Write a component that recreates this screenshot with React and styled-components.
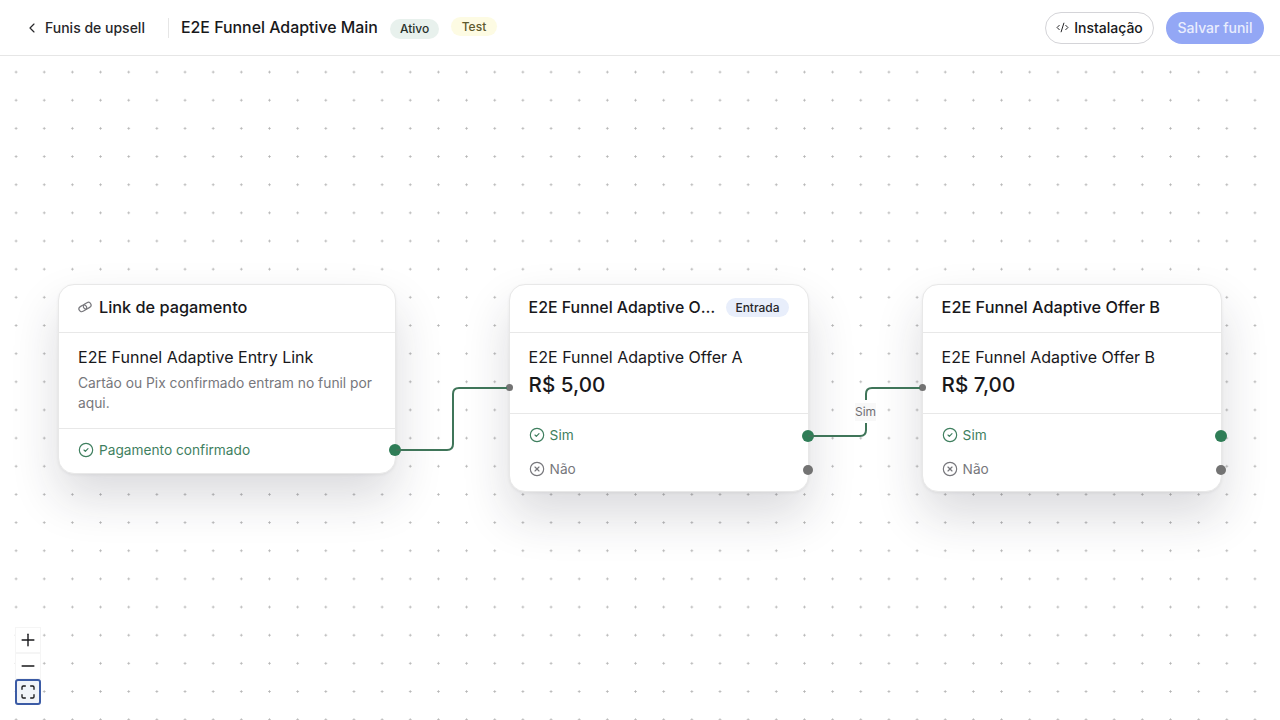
import styled, { createGlobalStyle } from "styled-components";
import { ChevronLeft, CodeXml, CircleCheck, CircleX, Plus, Minus, Maximize } from "lucide-react";

const GlobalStyle = createGlobalStyle`
    html, body {
        margin: 0;
        height: 100%;
        background: #fff;
    }
    body {
        font-family: Inter, "Liberation Sans", sans-serif;
        color: #18181b;
    }
`;

// Top bar

const Page = styled.div`
    width: 1280px;
    height: 720px;
    display: flex;
    flex-direction: column;
    overflow: hidden;
`;

const TopBar = styled.header`
    height: 55px;
    flex: none;
    display: flex;
    align-items: center;
    padding: 0 16px 0 24px;
    border-bottom: 1px solid #e6e6e6;
    background: #fff;
`;

const BackLink = styled.a`
    display: flex;
    align-items: center;
    gap: 5px;
    font-size: 14px;
    font-weight: 500;
    color: #27272a;
    padding-right: 23px;
    border-right: 1px solid #e6e6e6;
    height: 20px;
`;

const FunnelTitle = styled.h1`
    margin: 0 0 1px 12px;
    font-size: 15.9px;
    font-weight: 500;
    color: #18181b;
`;

const Badge = styled.span`
    display: inline-flex;
    align-items: center;
    height: ${(p) => p.$height}px;
    margin-left: 12px;
    margin-top: ${(p) => p.$top}px;
    padding: 0 ${(p) => p.$pad}px;
    border-radius: 10px;
    font-size: 12px;
    font-weight: 500;
    background: ${(p) => p.$bg};
    color: ${(p) => p.$color};
`;

const Actions = styled.div`
    margin-left: auto;
    display: flex;
    gap: 12px;
`;

const OutlineButton = styled.button`
    height: 32px;
    width: 109px;
    display: flex;
    align-items: center;
    justify-content: center;
    gap: 5px;
    border: 1px solid #d4d4d8;
    border-radius: 16px;
    background: #fff;
    color: #18181b;
    font: 500 14px Inter, sans-serif;
`;

const SaveButton = styled.button`
    height: 32px;
    width: 98px;
    border: 0;
    border-radius: 16px;
    background: #93a7f5;
    color: #e9edfd;
    font: 500 14px Inter, sans-serif;
`;

// Canvas

const Canvas = styled.main`
    position: relative;
    flex: 1;
    background-color: #fff;
    background-image: radial-gradient(circle, #b4b4b4 0.9px, transparent 1.2px);
    background-size: 28.16px 28.16px;
    background-position: 2px 2px;
`;

const EdgeLayer = styled.svg`
    position: absolute;
    inset: 0;
    width: 100%;
    height: 100%;
`;

const Node = styled.article`
    position: absolute;
    left: ${(p) => p.$x}px;
    top: 228px;
    width: ${(p) => p.$w}px;
    box-sizing: border-box;
    background: #fff;
    border: 1px solid #e8e8e8;
    border-radius: 16px;
    box-shadow: 0 24px 48px rgba(30, 30, 50, 0.16), 0 1px 3px rgba(15, 15, 25, 0.06);
`;

const NodeHeader = styled.div`
    height: 48px;
    box-sizing: border-box;
    display: flex;
    align-items: center;
    gap: 7px;
    padding: 0 19px 4px;
    border-bottom: 1px solid #e8e8e8;
`;

const HeaderTitle = styled.h2`
    margin: ${(p) => (p.$tight ? "2px 0 0" : "0")};
    flex: 0 1 auto;
    min-width: 0;
    font-size: ${(p) => (p.$tight ? "15.9px" : "16.3px")};
    font-weight: 500;
    color: #18181b;
    white-space: nowrap;
    overflow: hidden;
    text-overflow: ellipsis;
`;

const EntryBadge = styled.span`
    flex: none;
    margin-top: 2px;
    padding: 0 9px;
    height: 19px;
    display: flex;
    align-items: center;
    border-radius: 10px;
    background: #e8eefb;
    font-size: 12px;
    font-weight: 500;
    color: #27272a;
`;

const NodeBody = styled.div`
    padding: 14px 19px ${(p) => p.$bottom}px;
    border-bottom: 1px solid #e8e8e8;
`;

const NodeName = styled.div`
    font-size: 16.05px;
    font-weight: 400;
    line-height: 20px;
    color: #18181b;
`;

const Description = styled.p`
    margin: 6px 0 0;
    font-size: 13.8px;
    line-height: 20px;
    color: #77777c;
`;

const Price = styled.div`
    margin-top: 4px;
    font-size: 20.6px;
    font-weight: 500;
    line-height: 28px;
    color: #18181b;
`;

const Outcomes = styled.div`
    padding: ${(p) => p.$padding};
    display: flex;
    flex-direction: column;
    gap: 14px;
`;

const Outcome = styled.div`
    position: relative;
    height: 20px;
    display: flex;
    align-items: center;
    gap: 5px;
    font-size: 13.7px;
    color: ${(p) => (p.$tone === "yes" ? "#3f7f5f" : "#77777c")};
`;

const Port = styled.span`
    position: absolute;
    top: 50%;
    width: ${(p) => p.$size}px;
    height: ${(p) => p.$size}px;
    right: ${(p) => p.$right}px;
    transform: translateY(calc(-50% + ${(p) => p.$dy}px));
    border-radius: 50%;
    background: ${(p) => (p.$tone === "yes" ? "#2f7d57" : "#737373")};
`;

const InPort = styled.span`
    position: absolute;
    left: -4px;
    top: 99px;
    width: 7px;
    height: 7px;
    border-radius: 50%;
    background: #737373;
`;

const EdgeLabel = styled.span`
    position: absolute;
    left: 855px;
    top: 347px;
    font-size: 12px;
    line-height: 18px;
    color: #6f6f73;
    background: #f8f8f8;
`;

const ZoomPanel = styled.div`
    position: absolute;
    left: 15px;
    bottom: 15px;
    width: 26px;
    display: flex;
    flex-direction: column;
    background: #fff;
`;

const ZoomButton = styled.button`
    width: 26px;
    height: 26px;
    padding: 0;
    display: flex;
    align-items: center;
    justify-content: center;
    box-sizing: border-box;
    color: #18181b;
    background: ${(p) => (p.$focused ? "#f1f4f9" : "#fff")};
    border: ${(p) => (p.$focused ? "2px solid #3b5ba5" : "1px solid #f5f5f5")};
    border-radius: ${(p) => (p.$focused ? "3px" : "0")};
`;

function ChainIcon() {
    return (
        <svg width="14" height="14" viewBox="0 0 14 14" fill="none" stroke="#77777c" strokeWidth="1.25">
            <rect x="0.8" y="5.6" width="8" height="5.4" rx="2.7" transform="rotate(-30 4.8 8.3)" />
            <rect x="5.2" y="3" width="8" height="5.4" rx="2.7" transform="rotate(-30 9.2 5.7)" />
        </svg>
    );
}

function OutcomeRow({ tone, label, children }) {
    const Icon = tone === "yes" ? CircleCheck : CircleX;
    return (
        <Outcome $tone={tone}>
            <Icon size={16} strokeWidth={1.75} />
            {label}
            {children}
        </Outcome>
    );
}

function OfferNode({ x, title, name, price, entry }) {
    return (
        <Node $x={x} $w={300}>
            <InPort />
            <NodeHeader>
                <HeaderTitle $tight={entry}>{title}</HeaderTitle>
                {entry && <EntryBadge>Entrada</EntryBadge>}
            </NodeHeader>
            <NodeBody $bottom={14}>
                <NodeName>{name}</NodeName>
                <Price>{price}</Price>
            </NodeBody>
            <Outcomes $padding="11px 19px 12px">
                <OutcomeRow tone="yes" label="Sim">
                    <Port $tone="yes" $size={12} $right={-25} $dy={1} />
                </OutcomeRow>
                <OutcomeRow tone="no" label="Não">
                    <Port $tone="no" $size={10} $right={-24} $dy={1} />
                </OutcomeRow>
            </Outcomes>
        </Node>
    );
}

export default function App() {
    return (
        <Page>
            <GlobalStyle />
            <TopBar>
                <BackLink>
                    <ChevronLeft size={16} strokeWidth={1.75} />
                    Funis de upsell
                </BackLink>
                <FunnelTitle>E2E Funnel Adaptive Main</FunnelTitle>
                <Badge $pad={10} $top={2} $height={20} $bg="#e8f1ed" $color="#27302b">Ativo</Badge>
                <Badge $pad={10.5} $top={-2} $height={19} $bg="#fdfbe3" $color="#5e5a2e">Test</Badge>
                <Actions>
                    <OutlineButton>
                        <CodeXml size={13} strokeWidth={1.75} />
                        Instalação
                    </OutlineButton>
                    <SaveButton>Salvar funil</SaveButton>
                </Actions>
            </TopBar>

            <Canvas>
                <Node $x={58} $w={338}>
                    <NodeHeader>
                        <ChainIcon />
                        <HeaderTitle>Link de pagamento</HeaderTitle>
                    </NodeHeader>
                    <NodeBody $bottom={15}>
                        <NodeName>E2E Funnel Adaptive Entry Link</NodeName>
                        <Description>Cartão ou Pix confirmado entram no funil por aqui.</Description>
                    </NodeBody>
                    <Outcomes $padding="11px 19px 13px">
                        <OutcomeRow tone="yes" label="Pagamento confirmado">
                            <Port $tone="yes" $size={12} $right={-25} $dy={0} />
                        </OutcomeRow>
                    </Outcomes>
                </Node>

                <OfferNode x={508.6} title="E2E Funnel Adaptive Offer A" name="E2E Funnel Adaptive Offer A" price="R$ 5,00" entry />
                <OfferNode x={921.6} title="E2E Funnel Adaptive Offer B" name="E2E Funnel Adaptive Offer B" price="R$ 7,00" />

                <EdgeLayer viewBox="0 0 1280 664">
                    <g fill="none" stroke="#3f7559" strokeWidth="2">
                        <path d="M396 394 H447 Q453 394 453 388 V338 Q453 332 459 332 H507" />
                        <path d="M808 380 H860 Q866 380 866 374 V367" />
                        <path d="M866 344 V338 Q866 332 872 332 H920" />
                    </g>
                </EdgeLayer>
                <EdgeLabel>Sim</EdgeLabel>

                <ZoomPanel>
                    <ZoomButton><Plus size={20} strokeWidth={1.7} /></ZoomButton>
                    <ZoomButton><Minus size={20} strokeWidth={1.7} /></ZoomButton>
                    <ZoomButton $focused><Maximize size={16} strokeWidth={2} /></ZoomButton>
                </ZoomPanel>
            </Canvas>
        </Page>
    );
}
